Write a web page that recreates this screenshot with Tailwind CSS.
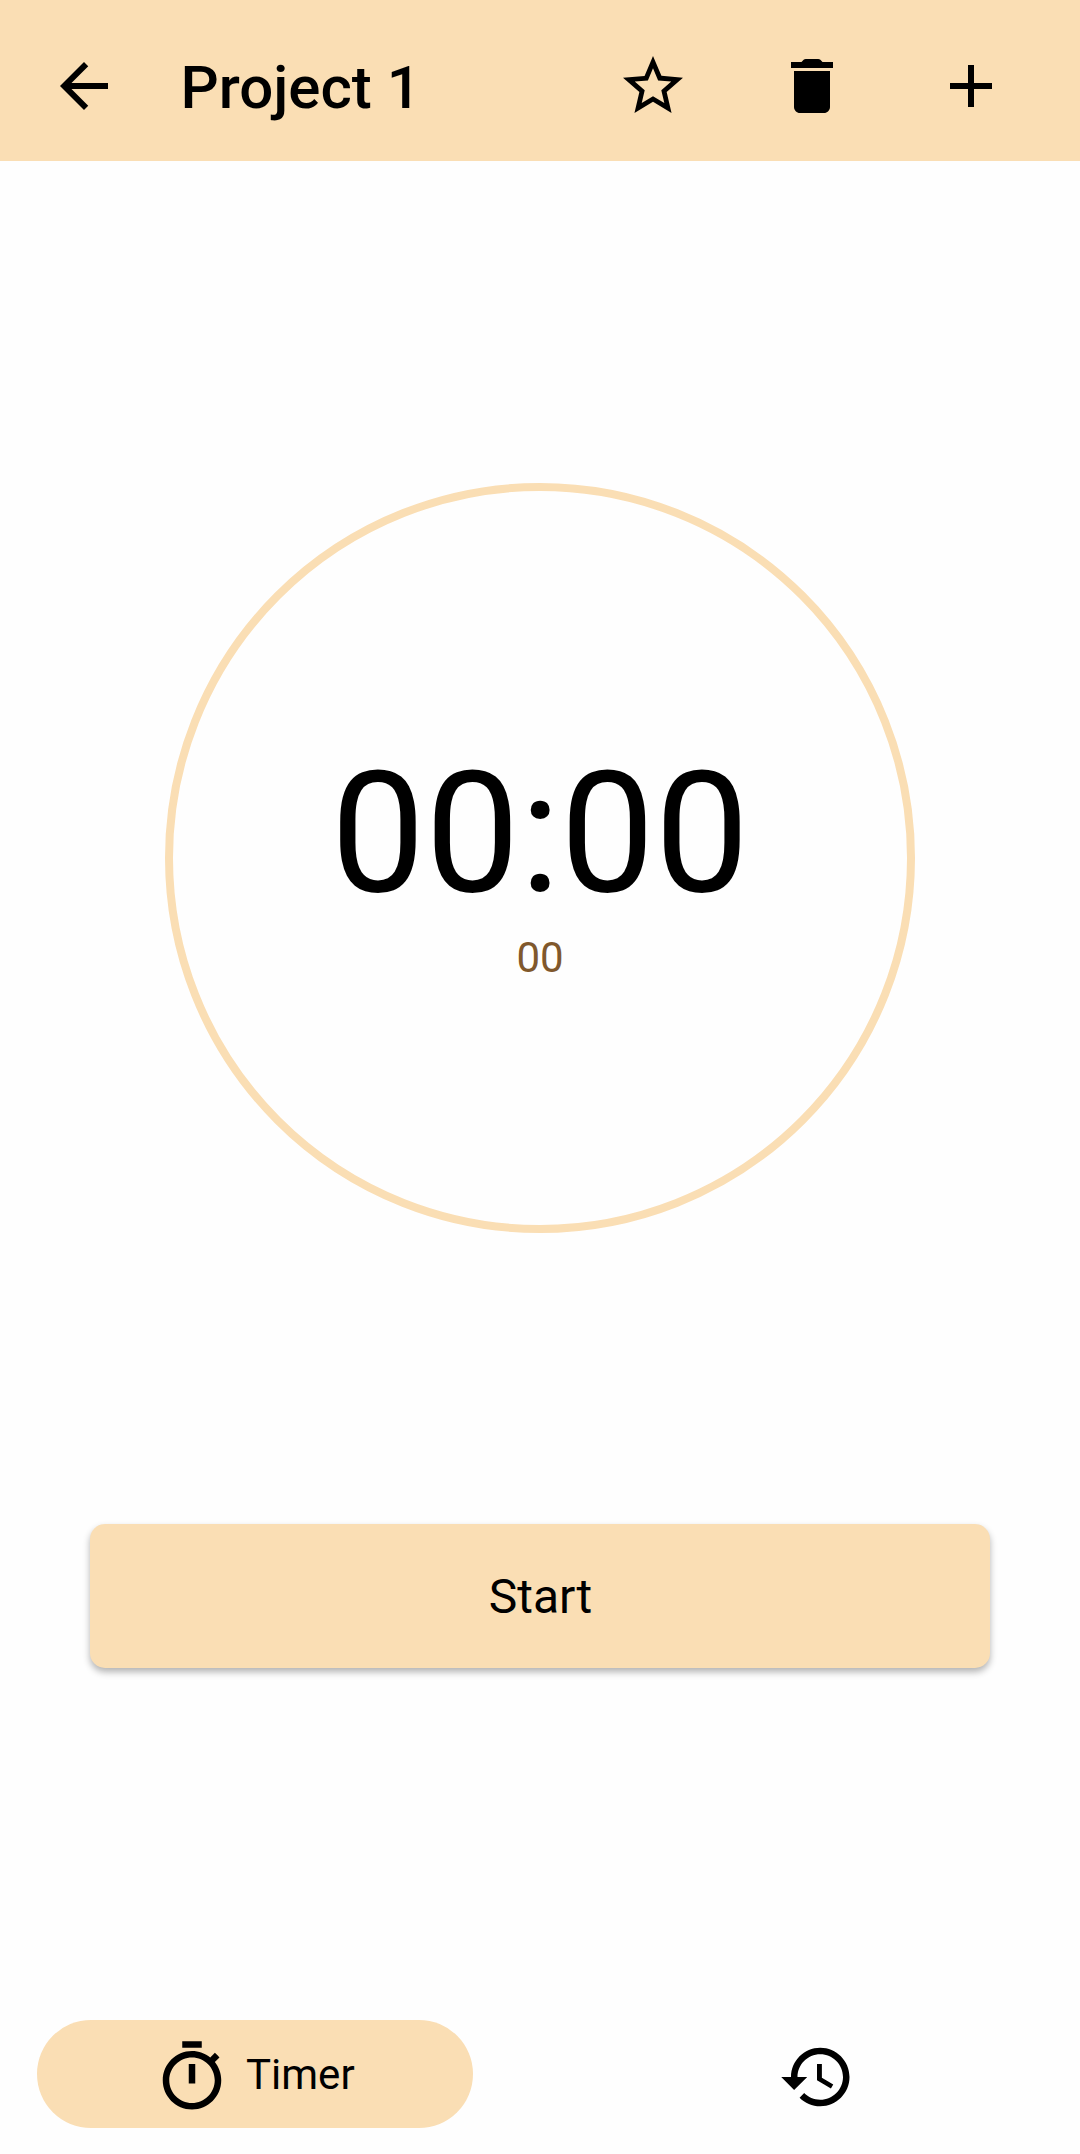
<!DOCTYPE html>
<html lang="en">
<head>
<meta charset="utf-8">
<title>Project 1</title>
<script src="https://cdn.jsdelivr.net/npm/@tailwindcss/browser@4"></script>
</head>
<body class="flex h-[2154px] w-[1080px] flex-col overflow-hidden bg-[#fefefe] font-[Roboto,sans-serif] text-black">
  <header class="flex h-[161px] shrink-0 items-center bg-[#fadeb4] pt-[11px] pl-12">
    <button class="size-[72px]"><svg viewBox="0 0 24 24" class="size-full" fill="currentColor"><path d="M20 11H7.83l5.59-5.59L12 4l-8 8 8 8 1.41-1.41L7.83 13H20v-2z"/></svg></button>
    <h1 class="ml-[60.5px] w-[436px] pt-[3px] text-[60px] leading-[72px] font-medium">Project 1</h1>
    <div class="flex gap-[87px]">
      <button class="size-[72px]"><svg viewBox="0 0 24 24" class="size-full" fill="currentColor"><path d="M22 9.24l-7.19-.62L12 2 9.19 8.63 2 9.24l5.46 4.73L5.82 21 12 17.27 18.18 21l-1.63-7.03L22 9.24zM12 15.4l-3.76 2.27 1-4.28-3.32-2.88 4.38-.38L12 6.1l1.71 4.04 4.38.38-3.32 2.88 1 4.28L12 15.4z"/></svg></button>
      <button class="size-[72px]"><svg viewBox="0 0 24 24" class="size-full" fill="currentColor"><path d="M6 19c0 1.1.9 2 2 2h8c1.1 0 2-.9 2-2V7H6v12zM19 4h-3.5l-.71-.71c-.18-.18-.44-.29-.7-.29H9.91c-.26 0-.52.11-.7.29L8.500 4H5v2h14V4z"/></svg></button>
      <button class="size-[72px]"><svg viewBox="0 0 24 24" class="size-full" fill="currentColor"><path d="M19 13h-6v6h-2v-6H5v-2h6V5h2v6h6v2z"/></svg></button>
    </div>
  </header>
  <main class="flex grow flex-col items-center pt-[322px]">
    <section class="flex size-[750px] shrink-0 flex-col items-center rounded-full border-8 border-[#fadeb4] pt-[245px]">
      <div class="text-[168px] leading-[196px]">00:00</div>
      <div class="mt-px text-[42px] leading-[50px] text-[#80582c]">00</div>
    </section>
    <button class="mt-[291px] h-36 w-[900px] shrink-0 rounded-[15px] bg-[#fadeb4] pt-[2px] pl-px text-[48px] leading-[56px] shadow-[0_4px_7px_rgba(0,0,0,0.3)]">Start</button>
  </main>
  <nav class="flex h-[134px] shrink-0 items-start pl-[37px]">
    <button class="flex h-[108px] w-[436px] items-center rounded-full bg-[#fadeb4] pl-[116px] text-[42px] leading-[50px]">
      <svg viewBox="0 0 24 24" class="mt-[6px] size-[78px]" fill="currentColor"><path d="M15 1H9v2h6V1zm-4 13h2V8h-2v6zm8.03-6.610l1.42-1.420c-.43-.51-.9-.99-1.410-1.410l-1.420 1.420C16.070 4.740 14.120 4 12 4c-4.970 0-9 4.030-9 9s4.020 9 9 9 9-4.030 9-9c0-2.120-.74-4.070-1.970-5.610zM12 20c-3.870 0-7-3.130-7-7s3.130-7 7-7 7 3.130 7 7-3.130 7-7 7z"/></svg>
      <span class="ml-[15px] pt-[2px]">Timer</span>
    </button>
    <button class="mt-[18px] ml-[305px] size-[78px]"><svg viewBox="0 0 24 24" class="size-full" fill="currentColor"><path d="M13 3c-4.970 0-9 4.030-9 9H1l3.890 3.890.07.14L9 12H6c0-3.870 3.130-7 7-7s7 3.130 7 7-3.130 7-7 7c-1.930 0-3.680-.79-4.940-2.060l-1.420 1.420C8.270 19.990 10.510 21 13 21c4.970 0 9-4.030 9-9s-4.030-9-9-9zm-1 5v5l4.280 2.540.72-1.210-3.500-2.080V8H12z"/></svg></button>
  </nav>
</body>
</html>
